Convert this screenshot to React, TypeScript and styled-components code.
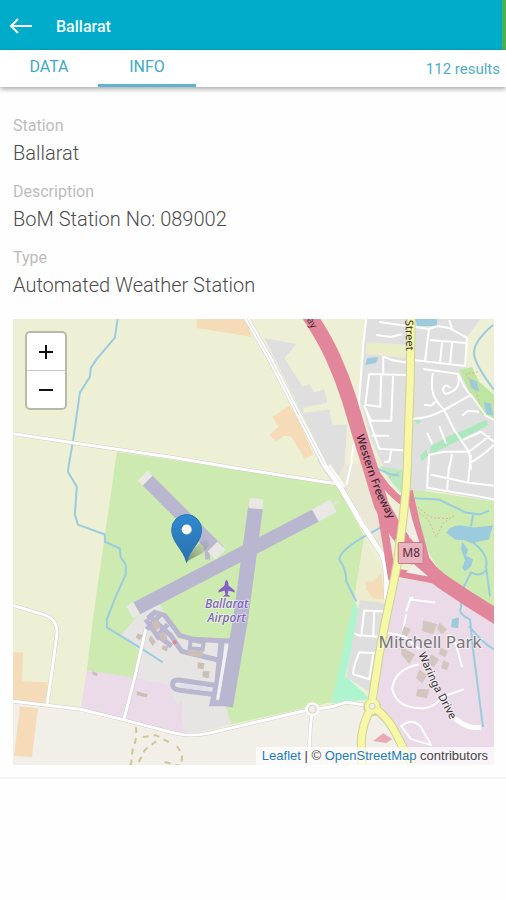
import React from "react";
import styled, { createGlobalStyle } from "styled-components";

const GlobalStyle = createGlobalStyle`
  *, *::before, *::after { box-sizing: border-box; }
  body {
    margin: 0;
    background: #fefefe;
    font-family: Roboto, "Liberation Sans", sans-serif;
    color: #4c4c4c;
  }
  button { font: inherit; border: 0; padding: 0; cursor: pointer; }
`;

const AppBar = styled.header`
  display: flex;
  align-items: center;
  gap: 20px;
  height: 50px;
  padding: 3px 8px 0;
  background: #00acca;
  border-right: 4px solid #4caf50;
`;

const BackButton = styled.button`
  display: flex;
  align-items: center;
  width: 28px;
  height: 32px;
  background: none;
  color: #fff;
`;

const Title = styled.h1`
  margin: 0;
  font-size: 16px;
  font-weight: 500;
  line-height: 24px;
  color: #f4fcfd;
`;

const TabBar = styled.nav`
  display: flex;
  align-items: center;
  height: 37px;
  padding-right: 6px;
  background: #fff;
  box-shadow: 0 2px 5px rgba(0, 0, 0, 0.35);
`;

const Tab = styled.button<{ $active?: boolean }>`
  width: 98px;
  height: 37px;
  background: none;
  border-bottom: 3px solid ${(p) => (p.$active ? "#5fb3cd" : "transparent")};
  color: #3fa9c6;
  font-size: 16px;
  line-height: 34px;
`;

const Results = styled.span`
  margin-left: auto;
  color: #4fadc8;
  font-size: 15px;
  line-height: 34px;
`;

const Content = styled.main`
  padding: 26px 12px 12px 13px;
  border-bottom: 2px solid #f6f6f6;
`;

const Details = styled.dl`
  display: flex;
  flex-direction: column;
  gap: 12px;
  margin: 0 0 20px;
`;

const Field = styled.div``;

const Label = styled.dt`
  font-size: 16px;
  line-height: 26px;
  color: #bcbcbc;
`;

const Value = styled.dd`
  margin: 0;
  font-size: 20px;
  font-weight: 300;
  line-height: 28px;
`;

const MapFrame = styled.section`
  position: relative;
  overflow: hidden;
`;

const MapCanvas = styled.svg`
  display: block;
  width: 100%;
  height: auto;
`;

const ZoomControl = styled.div`
  position: absolute;
  top: 12px;
  left: 12px;
  width: 42px;
  border: 2px solid #b9bba8;
  border-radius: 5px;
  background: #fff;
`;

const ZoomButton = styled.button`
  display: flex;
  align-items: center;
  justify-content: center;
  width: 100%;
  height: 37px;
  background: none;
  color: #111;

  & + & {
    height: 38px;
    border-top: 1px solid #ccc;
  }
`;

const Attribution = styled.div`
  position: absolute;
  right: 0;
  bottom: 0;
  padding: 0 6px;
  background: rgba(255, 255, 255, 0.7);
  font-family: "Liberation Sans", sans-serif;
  font-size: 13px;
  line-height: 18px;
  color: #444;
  white-space: nowrap;
`;

const MapLink = styled.a`
  color: #1d7fb8;
  text-decoration: none;
`;

const RoadCasing = styled.path<{ $w: number }>`
  fill: none;
  stroke: #cfcdca;
  stroke-width: ${(p) => p.$w};
`;

const Road = styled.path<{ $w: number }>`
  fill: none;
  stroke: #fff;
  stroke-width: ${(p) => p.$w};
  stroke-linejoin: round;
`;

const Water = styled.path`
  fill: none;
  stroke: #99cce0;
  stroke-width: 2;
  stroke-linejoin: round;
`;

const PlaceLabel = styled.text`
  font-family: "Noto Sans", sans-serif;
  paint-order: stroke;
  stroke: rgba(255, 255, 255, 0.45);
  stroke-width: 2px;
`;

const countryRoads = [
  "M13 434 73 443 175 458 240 469 337 484",
  "M13 606 43 615 Q58 620 57 634 L53 665 47 706",
  "M146 630 135 678 124 721",
  "M13 702 47 706 80 710 125 721 175 734 Q190 738 210 734 L303 712 335 707 347 703 367 706",
  "M313 710 311 728 309 766",
];

const suburbRoads =
  "M367 318 364 345 361 385 358 425 352 460 M380 322 409 326 430 329 438 326 450 328 468 338 466 366 415 360 M410 363 392 360 385 357 M377 335 392 337 403 334 M384 356 384 373 M370 374 409 375 M370 374 366 405 381 407 382 374 M394 374 392 421 372 421 365 406 380 449 409 451 M373 436 390 436 M392 451 390 462 385 462 M450 320 453 329 M430 328 426 361 M431 340 467 343 M443 342 441 362 M453 343 451 364 M424 369 459 374 Q468 394 472 395 L487 416 495 420 M434 373 Q430 390 438 402 L445 410 472 395 M459 375 Q462 388 452 392 Q444 397 444 389 Q446 383 451 388 M425 405 432 406 436 402 M413 419 Q432 418 445 410 L455 430 470 452 472 470 M463 416 469 411 480 412 M428 433 433 444 M440 426 447 444 M429 470 430 455 445 452 470 452 491 436 M464 440 482 432 495 442 M450 470 453 454 M470 464 Q485 455 495 445 M429 466 428 488 457 493 476 496 495 500 M432 475 470 483 495 486 M472 455 469 483 M450 466 448 490 M353 460 347 485 M330 465 345 487";

const southRoads =
  "M387 612 365 611 362 636 383 638 M375 612 374 637 M355 634 362 637 M379 654 360 653 Q353 670 354 675 L370 680 374 655 M407 615 403 635 420 650 M385 633 406 637 M410 599 414 598 M407 612 411 600 436 603 M420 665 Q395 670 393 690 Q398 710 425 709 Q437 707 442 698 L465 690 M463 668 457 645 450 635 M402 727 Q413 718 422 728 L432 746 412 740 Z";

const houses =
  "M424 621 438 625 434 635 423 632Z M440 623 448 630 443 635 438 630Z M405 627 412 630 408 637 402 635Z M402 648 416 655 410 665 402 655Z M432 655 440 660 435 668 428 664Z M441 648 449 652 446 658 440 655Z M420 670 428 676 423 684 417 679Z M444 661 450 664 448 671 442 669Z M418 690 430 690 428 699 417 697Z";

const AirportMap = () => (
  <MapCanvas viewBox="13 319 482 447" role="img" aria-label="Map of Ballarat Airport and Mitchell Park">
    <rect x="13" y="319" width="482" height="447" fill="#eef0d5" />
    <path d="M13 702 80 710 175 734 200 736 313 710 373 704 495 704V766H13Z" fill="#f2efe9" />

    <g fill="#f6dbb8">
      <path d="M197 318H247L252 337 197 328Z" />
      <path d="M290 406 273 417 279 427 270 435 276 442 285 436 292 437 305 459 314 455 298 418Z" />
      <path d="M13 653H23L22 682 48 683 45 705 13 701Z M20 707 38 709 32 758 14 757Z" />
    </g>

    <g fill="#e0dfe0">
      <path d="M265 338 297 344 285 358 303 387 310 384 315 393 325 389 328 403 304 408V413L330 410 333 425H348L345 470 338 484Z" />
      <path d="M367 318H482L468 337 467 368 495 418V502L428 490 408 500 390 480 372 440 360 398Z" />
      <path d="M318 461 345 466 338 490Z" />
    </g>
    <path d="M368 342 409 345V358L366 354Z" fill="#ebedc9" />
    <path d="M348 425 358 425 368 470 352 482Z" fill="#eef0d5" />

    <path d="M117 452 240 470 337 484 365 537 355 600 355 615 332 703 232 725 190 700 87 671 93 620Z" fill="#cdebb0" />
    <path d="M87 671 132 678 181 684 190 735 125 721 81 708Z" fill="#ebdbe8" />
    <path d="M355 600 361 615 346 677 364 693 370 700 332 704Z" fill="#aef4cf" />
    <path d="M361 598 390 602 372 694 347 678Z" fill="#dfdedf" />
    <path d="M365 537 385 575 386 604 355 600Z" fill="#ebedce" />
    <path d="M382 573 375 582 366 582 367 590 374 599 385 600Z" fill="#f6dbb8" />
    <path d="M337 480 365 520 388 560 384 510 368 462 345 465Z" fill="#ebe7d6" />
    <path d="M330 508 340 503 338 500Z" fill="#e4e2d8" />
    <path d="M409 490 430 492 495 502V610L445 580 425 545Z" fill="#cdebb0" />
    <path d="M390 478 380 466 400 470 408 468 407 500Z" fill="#bce9c0" />
    <path d="M392 578 432 583 465 598 495 615V766H418L388 717 378 700 383 655Z" fill="#ebdbe8" />
    <path d="M120 637 142 612 160 604 178 640 235 642 226 706 232 725 192 735 182 729 181 712 168 685 132 678 142 652Z" fill="#e7e5e4" />
    <path d="M182 700Q174 712 182 729Z" fill="#ebd7e5" />

    <path d="M460 370 473 367 480 382 495 395V421L483 415 472 395Z" fill="#bde6a3" />
    <path d="M431 447 450 436 466 430 487 420 490 425 465 438 431 455Z" fill="#abe8be" />
    <path d="M421 456 427 450 429 456 422 462Z M415 420 423 421 418 425Z" fill="#abe8be" />
    <g fill="#9bcbdc">
      <path d="M416 319H438V326L418 326Z" />
      <path d="M368 358 379 357 377 363 366 365Z" />
      <path d="M470 378 478 382 480 392 472 388Z M485 402 492 404 494 416 487 414Z" />
      <path d="M447 533 Q452 525 463 526 L475 528 494 526 490 540 480 542 473 544 466 541 456 540Z" />
      <path d="M463 542 469 550 467 556 474 560 472 567 466 572 463 568 466 561 462 550Z" />
      <path d="M453 620 460 618 459 629 452 628Z" />
    </g>
    <path d="M412 503 432 518 450 519 M414 508 429 520 437 537 444 524 455 516 M390 478 401 472 M479 372 467 374 476 390 483 411" fill="none" stroke="#e5ac8c" strokeDasharray="2 2" />

    <Water d="M118 318 115 338 97 359 91 368 90 377 80 393 73 442 69 465 68 472 77 487 75 515 78 525 105 535V542L120 549 121 558 126 565V575L116 597 107 620V628L143 650 163 663" />
    <Water d="M494 325Q474 342 475 354 Q476 365 495 390" />
    <Water d="M383 527 363 538Q340 552 340 560Q347 570 347 582L357 602" />
    <Water d="M371 470Q382 488 393 492L403 498 440 500 467 513 480 515 490 511 M474 515 472 527 M474 543Q490 555 487 567L491 597 M487 571Q480 578 472 573Q470 577 466 585L462 592V608Q458 614 471 620L474 650 484 728" />
    <Water d="M470 627Q485 645 495 650 M372 466 389 474 400 476" />

    {countryRoads.map((d) => (
      <RoadCasing key={d} $w={4} d={d} />
    ))}
    {countryRoads.map((d) => (
      <Road key={d} $w={3} d={d} />
    ))}
    <RoadCasing $w={6} d="M247 318 270 358 325 465 342 489 363 525 383 555Q389 570 387 600" />
    <Road $w={5} d="M247 318 270 358 325 465 342 489 363 525 383 555Q389 570 387 600" />
    <path d="M247 318 270 358 325 465" fill="none" stroke="#dddcda" />
    <Road $w={2} d={suburbRoads} />
    <Road $w={2} d={southRoads} />
    <path d={houses} fill="#d4c5be" />
    <path d="M374 742 384 734 393 740 387 744Z" fill="#e9a9b2" />

    <g fill="none" stroke="#b9b7cf">
      <path d="M147 480 219 552" strokeWidth="14" />
      <path d="M203 538Q208 548 208 560" strokeWidth="5" />
      <path d="M137 609 318 515" strokeWidth="14" />
      <path d="M256 508 241 620 226 707" strokeWidth="15" />
      <path d="M148 619 155 613 165 616 180 636 194 640 234 642" strokeWidth="5" />
      <path d="M150 617 171 636 182 652 220 661" strokeWidth="5" />
      <path d="M222 642 218 682 213 704H228" strokeWidth="6" />
      <path d="M213 695 180 691Q172 690 173 684Q174 680 181 681L215 686" strokeWidth="5" />
      <path d="M146 620 160 640 M160 616 147 630 M168 625 158 636 172 647" strokeWidth="5" />
      <path d="M191 641 204 643 203 650 190 649Z" strokeWidth="4" />
    </g>
    <g fill="none" stroke="#e9e8e4" strokeWidth="14">
      <path d="M143 476 148 481" />
      <path d="M213 547 221 555" />
      <path d="M130 613 137 609" />
      <path d="M316 516 334 506" />
      <path d="M257 499 256 509" />
    </g>
    <path d="M227 646 218 700" stroke="#f1f0f0" strokeWidth="3" />
    <path d="M181 686 209 690" stroke="#dedfe9" strokeWidth="4" />
    <path d="M152 623 158 621 161 628 155 632Z M159 634 165 633 168 639 162 642Z M188 651 204 652 202 658 188 656Z M198 663 205 664 204 670 198 669Z M203 672 210 672 209 679 203 678Z M138 634 143 636 140 641 136 638Z M151 636 156 642 153 647 149 641Z M163 646 169 647 167 652 162 650Z M93 672 98 674 97 677 92 675Z M137 692 148 695 147 698 137 696Z" fill="#cbbfb8" />
    <circle cx="175" cy="643" r="2" fill="#df8791" />
    <path d="M136 728Q138 738 133 750L131 766 M143 738 156 736 171 744 M139 763 145 751 158 741 M165 763 181 767 M177 747 Q186 757 180 766" fill="none" stroke="#d0c692" strokeWidth="2" strokeDasharray="6 5" />

    <g fill="none" stroke="#e2879b">
      <path d="M309 314Q325 338 334 358T350 400L362 440 370 465 382 505 396 530 420 563 443 582 470 600 500 619" strokeWidth="15" />
      <path d="M372 464Q385 490 407 505" strokeWidth="7" />
      <path d="M410 491 417 522 427 560 445 583" strokeWidth="7" />
      <path d="M382 512 388 548 393 580 M397 573 430 579 450 585" strokeWidth="8" />
    </g>
    <path d="M396 539 398 568 408 559Z M407 573 414 564 429 577Z M408 525 412 517 421 545 410 538Z" fill="#f1eee6" />

    <g fill="none" strokeLinejoin="round">
      <path d="M412 318 411 382 408 470 407 488 404 518 398 565 392 595 387 618 380 655 373 700" stroke="#cfd09a" strokeWidth="9" />
      <path d="M373 707Q362 725 362 745L363 766 M373 707Q389 718 397 735L413 766" stroke="#cfd09a" strokeWidth="9" />
      <circle cx="373" cy="708" r="8" stroke="#cfd09a" strokeWidth="2" />
      <path d="M412 318 411 382 408 470 407 488 404 518 398 565 392 595 387 618 380 655 373 700" stroke="#f7f8a6" strokeWidth="7" />
      <path d="M373 707Q362 725 362 745L363 766 M373 707Q389 718 397 735L413 766" stroke="#f7f8a6" strokeWidth="7" />
      <circle cx="373" cy="707" r="5" fill="#fff" stroke="#f7f8a6" strokeWidth="5" />
      <circle cx="373" cy="707" r="3" fill="#f4f1e9" stroke="#d2d0ba" />
      <circle cx="313" cy="710" r="5" fill="#f2efe9" stroke="#fff" strokeWidth="4" />
      <circle cx="313" cy="710" r="4" fill="#f2efe9" stroke="#cfcdca" />
      <path d="M455 719Q470 731 482 728" stroke="#fff" strokeWidth="5" />
    </g>

    <rect x="399" y="543" width="25" height="21" rx="1" fill="#e9b4be" stroke="#c47b8b" />
    <text x="412" y="558" textAnchor="middle" fontFamily="Noto Sans" fontSize="12" fontWeight="500" fill="#6c3748">M8</text>

    <path d="M227 580 Q229 582 229 586 L235 591V593L229 591 228 595 231 597H223L226 595 225 591 219 593V591L225 586Q225 582 227 580Z" fill="#8461c4" />
    <PlaceLabel textAnchor="middle" fontSize="12" fontWeight="500" fontStyle="italic" fill="#8461c4">
      <tspan x="227" y="609">Ballarat</tspan>
      <tspan x="227" y="623">Airport</tspan>
    </PlaceLabel>
    <PlaceLabel x="431" y="649" textAnchor="middle" fontSize="17" fill="#777">Mitchell Park</PlaceLabel>

    <defs>
      <path id="freeway" d="M357 436 366 465 377 496 390 520 402 540" />
      <path id="waringa" d="M419 655 433 686 454 726" />
    </defs>
    <text fontFamily="Noto Sans" fontSize="11" fontWeight="500" fill="#3c2930">
      <textPath href="#freeway">Western Freeway</textPath>
    </text>
    <PlaceLabel fontSize="11" fill="#333">
      <textPath href="#waringa">Waringa Drive</textPath>
    </PlaceLabel>
    <text transform="translate(406 320) rotate(88)" fontFamily="Noto Sans" fontSize="11" fill="#333">Street</text>
    <text transform="translate(307 320) rotate(58)" fontFamily="Noto Sans" fontSize="10" fill="#4a2932">ay</text>

    <defs>
      <linearGradient id="pin" x1="0" y1="0" x2="0" y2="1">
        <stop offset="0" stopColor="#2f8ad0" />
        <stop offset="1" stopColor="#2a6fae" />
      </linearGradient>
      <linearGradient id="shadow" x1="0" y1="1" x2="1" y2="0">
        <stop offset="0" stopColor="#333" stopOpacity="0.5" />
        <stop offset="1" stopColor="#333" stopOpacity="0" />
      </linearGradient>
    </defs>
    <path d="M187 562Q196 543 207 540Q214 544 202 554Z" fill="url(#shadow)" />
    <path d="M187 563 C184 550 172 543 172 530 A15 15 0 0 1 202 530 C202 543 190 550 187 563Z" fill="url(#pin)" stroke="#2b75b2" />
    <circle cx="187" cy="530" r="5" fill="#fff" />
  </MapCanvas>
);

const fields = [
  { label: "Station", value: "Ballarat" },
  { label: "Description", value: "BoM Station No: 089002" },
  { label: "Type", value: "Automated Weather Station" },
];

export default function App() {
  return (
    <>
      <GlobalStyle />
      <AppBar>
        <BackButton aria-label="Back">
          <svg width="26" height="20" viewBox="0 0 26 20" fill="none" stroke="currentColor" strokeWidth="2">
            <path d="M24 9H3M10 2 3 9l7 7" />
          </svg>
        </BackButton>
        <Title>Ballarat</Title>
      </AppBar>
      <TabBar>
        <Tab>DATA</Tab>
        <Tab $active aria-current="page">INFO</Tab>
        <Results>112 results</Results>
      </TabBar>
      <Content>
        <Details>
          {fields.map((f) => (
            <Field key={f.label}>
              <Label>{f.label}</Label>
              <Value>{f.value}</Value>
            </Field>
          ))}
        </Details>
        <MapFrame>
          <AirportMap />
          <ZoomControl>
            <ZoomButton aria-label="Zoom in">
              <svg width="16" height="16" viewBox="0 0 16 16" stroke="currentColor" strokeWidth="2">
                <path d="M1 8H15M8 1V15" />
              </svg>
            </ZoomButton>
            <ZoomButton aria-label="Zoom out">
              <svg width="16" height="16" viewBox="0 0 16 16" stroke="currentColor" strokeWidth="2">
                <path d="M1 8H15" />
              </svg>
            </ZoomButton>
          </ZoomControl>
          <Attribution>
            <MapLink href="#leaflet">Leaflet</MapLink> | © <MapLink href="#osm">OpenStreetMap</MapLink> contributors
          </Attribution>
        </MapFrame>
      </Content>
    </>
  );
}
